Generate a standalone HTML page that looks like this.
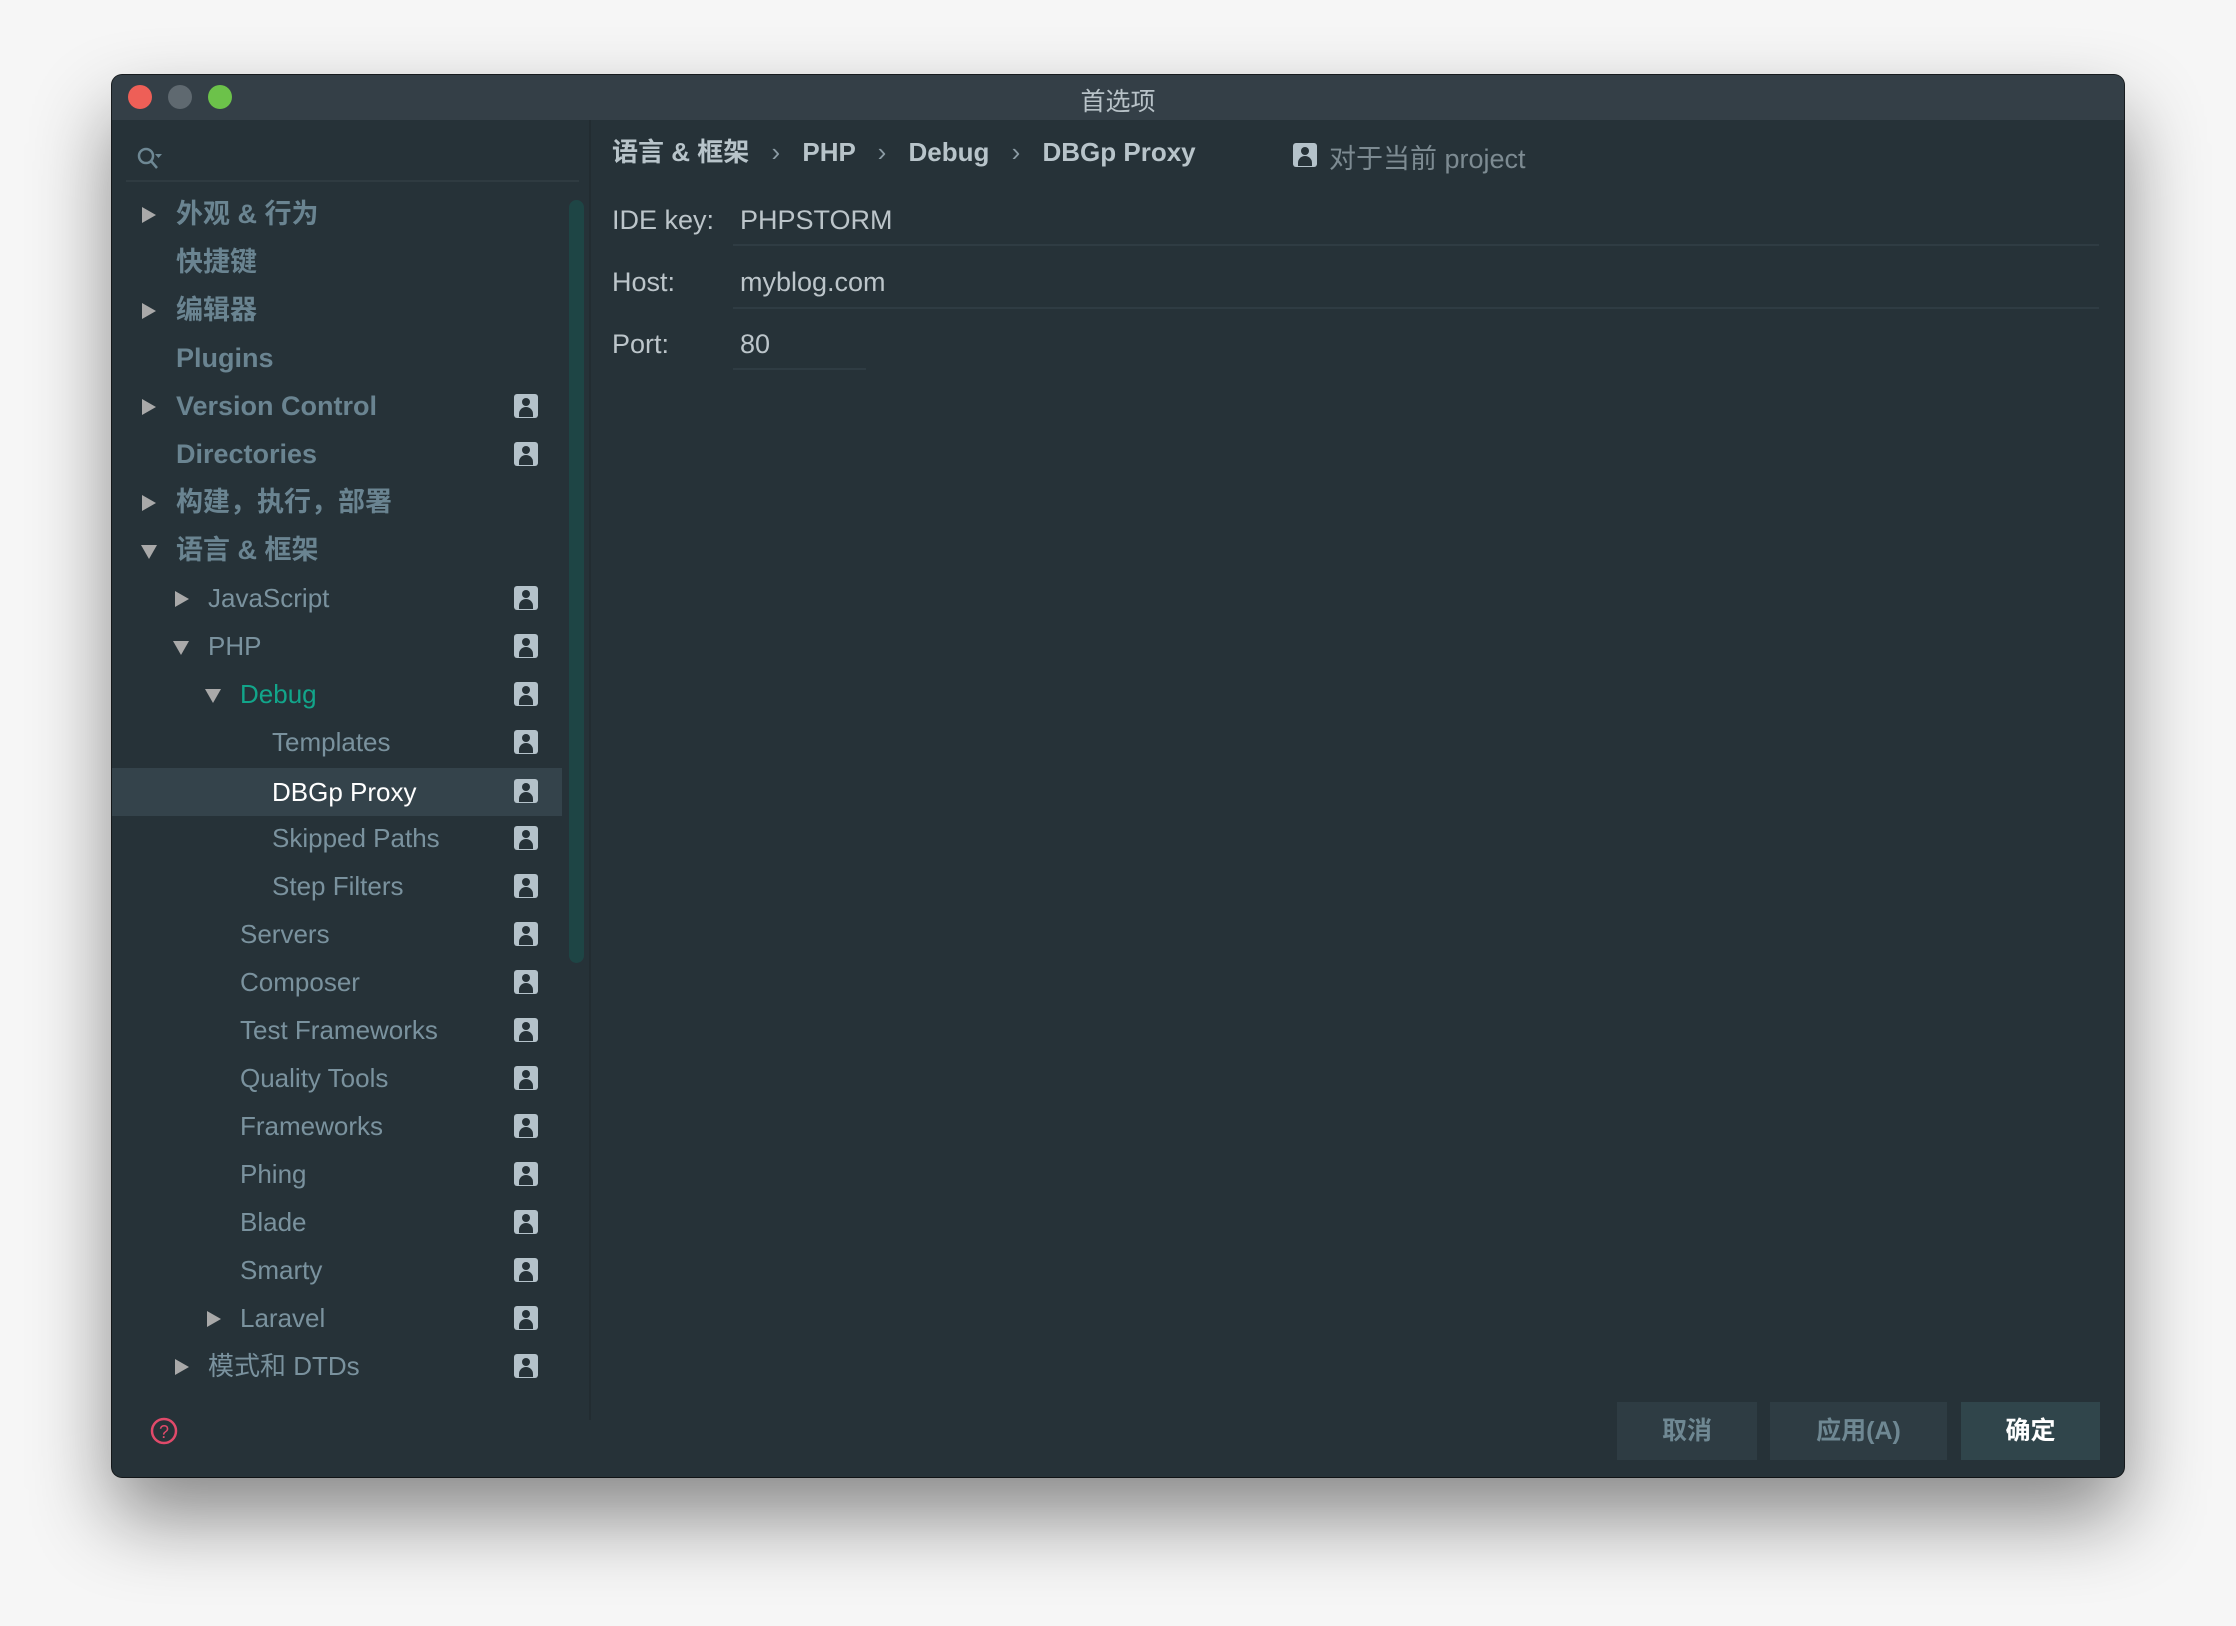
<!DOCTYPE html>
<html><head><meta charset="utf-8"><style>
*{margin:0;padding:0;box-sizing:border-box}
body{width:2236px;height:1626px;background:#f6f6f6;position:relative;overflow:hidden;font-family:"Liberation Sans","Noto Sans CJK SC",sans-serif}
.win{position:absolute;left:112px;top:75px;width:2012px;height:1402px;background:#263238;border-radius:10px;box-shadow:0 40px 80px rgba(0,0,0,.45),0 0 0 1px #1a1f22;overflow:hidden}
.tb{position:absolute;left:0;top:0;width:100%;height:45px;background:#343f47;}
.tl{position:absolute;top:10px;width:24px;height:24px;border-radius:50%}
.title{position:absolute;left:0;width:100%;top:7px;text-align:center;color:#b8c2c8;font-size:25px}
.side{position:absolute;left:0;top:45px;width:479px;height:1300px;border-right:2px solid #222c31}
.sline{position:absolute;left:14px;top:60px;width:453px;height:2px;background:#2f3b41}
.row{position:absolute;left:0;height:48px;line-height:48px;font-size:26px;color:#7a929e;white-space:nowrap;width:450px}
.row.b{font-weight:bold;color:#6a8491;font-size:27px}
.row.sel{background:#34434b;color:#fff}
.arr{position:absolute;top:17px;width:0;height:0}
.ar{border-left:14px solid #a9a9a9;border-top:8px solid transparent;border-bottom:8px solid transparent}
.ad{border-top:14px solid #a9a9a9;border-left:8px solid transparent;border-right:8px solid transparent;top:19px}
.ic{position:absolute;left:402px;top:12px;width:24px;height:24px;background:#b4c2ca;border-radius:3px;overflow:hidden}
.ic:before{content:"";position:absolute;left:8px;top:4px;width:8px;height:8px;border-radius:50%;background:#263238}
.ic:after{content:"";position:absolute;left:5px;top:13px;width:14px;height:10px;border-radius:7px 7px 0 0;background:#263238}
.lbl{position:absolute;color:#bcc5ca;font-size:27px}
.ul{position:absolute;height:2px;background:#2f3c43}
.btn{position:absolute;top:1327px;height:58px;background:#2e3c43;color:#6f8893;font-size:25px;font-weight:bold;text-align:center;line-height:58px}
.sep{color:#8a9aa3;font-weight:normal;margin:0 15px}
</style></head><body>
<div class="win">
<div class="tb">
<div class="tl" style="left:16px;background:#ee5f57"></div>
<div class="tl" style="left:56px;background:#5f6970"></div>
<div class="tl" style="left:96px;background:#6cc24a"></div>
<div class="title">首选项</div>
</div>
<div class="side">
<svg style="position:absolute;left:24px;top:26px" width="28" height="26" viewBox="0 0 28 26"><circle cx="10" cy="10" r="7" fill="none" stroke="#6e8894" stroke-width="2.5"/><line x1="15" y1="15" x2="21" y2="22" stroke="#6e8894" stroke-width="2.5"/><path d="M19 8h7l-3.5 4z" fill="#6e8894"/></svg>
<div class="sline"></div>
<div style="position:absolute;left:457px;top:80px;width:15px;height:763px;background:#1e4545;border-radius:8px"></div>
</div>
<div style="position:absolute;left:0;top:-1px;width:480px">
<div class="row b" style="top:116px"><span class="arr ar" style="left:30px"></span><span style="position:absolute;left:64px">外观 &amp; 行为</span></div>
<div class="row b" style="top:164px"><span style="position:absolute;left:64px">快捷键</span></div>
<div class="row b" style="top:212px"><span class="arr ar" style="left:30px"></span><span style="position:absolute;left:64px">编辑器</span></div>
<div class="row b" style="top:260px"><span style="position:absolute;left:64px">Plugins</span></div>
<div class="row b" style="top:308px"><span class="arr ar" style="left:30px"></span><span style="position:absolute;left:64px">Version Control</span><span class="ic"></span></div>
<div class="row b" style="top:356px"><span style="position:absolute;left:64px">Directories</span><span class="ic"></span></div>
<div class="row b" style="top:404px"><span class="arr ar" style="left:30px"></span><span style="position:absolute;left:64px">构建，执行，部署</span></div>
<div class="row b" style="top:452px"><span class="arr ad" style="left:29px"></span><span style="position:absolute;left:64px">语言 &amp; 框架</span></div>
<div class="row" style="top:500px"><span class="arr ar" style="left:63px"></span><span style="position:absolute;left:96px">JavaScript</span><span class="ic"></span></div>
<div class="row" style="top:548px"><span class="arr ad" style="left:61px"></span><span style="position:absolute;left:96px">PHP</span><span class="ic"></span></div>
<div class="row" style="top:596px;color:#12a58a"><span class="arr ad" style="left:93px"></span><span style="position:absolute;left:128px">Debug</span><span class="ic"></span></div>
<div class="row" style="top:644px"><span style="position:absolute;left:160px">Templates</span><span class="ic"></span></div>
<div class="row sel" style="top:694px"><span style="position:absolute;left:160px">DBGp Proxy</span><span class="ic" style="top:11px"></span></div>
<div class="row" style="top:740px"><span style="position:absolute;left:160px">Skipped Paths</span><span class="ic"></span></div>
<div class="row" style="top:788px"><span style="position:absolute;left:160px">Step Filters</span><span class="ic"></span></div>
<div class="row" style="top:836px"><span style="position:absolute;left:128px">Servers</span><span class="ic"></span></div>
<div class="row" style="top:884px"><span style="position:absolute;left:128px">Composer</span><span class="ic"></span></div>
<div class="row" style="top:932px"><span style="position:absolute;left:128px">Test Frameworks</span><span class="ic"></span></div>
<div class="row" style="top:980px"><span style="position:absolute;left:128px">Quality Tools</span><span class="ic"></span></div>
<div class="row" style="top:1028px"><span style="position:absolute;left:128px">Frameworks</span><span class="ic"></span></div>
<div class="row" style="top:1076px"><span style="position:absolute;left:128px">Phing</span><span class="ic"></span></div>
<div class="row" style="top:1124px"><span style="position:absolute;left:128px">Blade</span><span class="ic"></span></div>
<div class="row" style="top:1172px"><span style="position:absolute;left:128px">Smarty</span><span class="ic"></span></div>
<div class="row" style="top:1220px"><span class="arr ar" style="left:95px"></span><span style="position:absolute;left:128px">Laravel</span><span class="ic"></span></div>
<div class="row" style="top:1268px"><span class="arr ar" style="left:63px"></span><span style="position:absolute;left:96px">模式和 DTDs</span><span class="ic"></span></div>
</div>
<div style="position:absolute;left:500px;top:57px;font-size:26px;font-weight:bold;color:#b8c4ca;white-space:nowrap">语言 &amp; 框架 <span class="sep">›</span> PHP <span class="sep">›</span> Debug <span class="sep">›</span> DBGp Proxy</div>
<span class="ic" style="position:absolute;left:1181px;top:68px"></span>
<div style="position:absolute;left:1217px;top:62px;font-size:27px;color:#7d8b92">对于当前 project</div>
<div class="lbl" style="left:500px;top:130px">IDE key:</div>
<div class="lbl" style="left:628px;top:130px">PHPSTORM</div>
<div class="ul" style="left:621px;top:169px;width:1366px"></div>
<div class="lbl" style="left:500px;top:192px">Host:</div>
<div class="lbl" style="left:628px;top:192px">myblog.com</div>
<div class="ul" style="left:621px;top:232px;width:1366px"></div>
<div class="lbl" style="left:500px;top:254px">Port:</div>
<div class="lbl" style="left:628px;top:254px">80</div>
<div class="ul" style="left:621px;top:293px;width:133px"></div>
<svg style="position:absolute;left:37px;top:1341px" width="30" height="30" viewBox="0 0 30 30"><circle cx="15" cy="15" r="12" fill="none" stroke="#e04a6a" stroke-width="2.5"/><text x="15" y="22" text-anchor="middle" font-size="18" fill="#e04a6a" font-family="Liberation Sans">?</text></svg>
<div class="btn" style="left:1505px;width:140px">取消</div>
<div class="btn" style="left:1658px;width:177px">应用(A)</div>
<div class="btn" style="left:1849px;width:139px;background:#30454b;color:#fff">确定</div>
</div>
</body></html>
